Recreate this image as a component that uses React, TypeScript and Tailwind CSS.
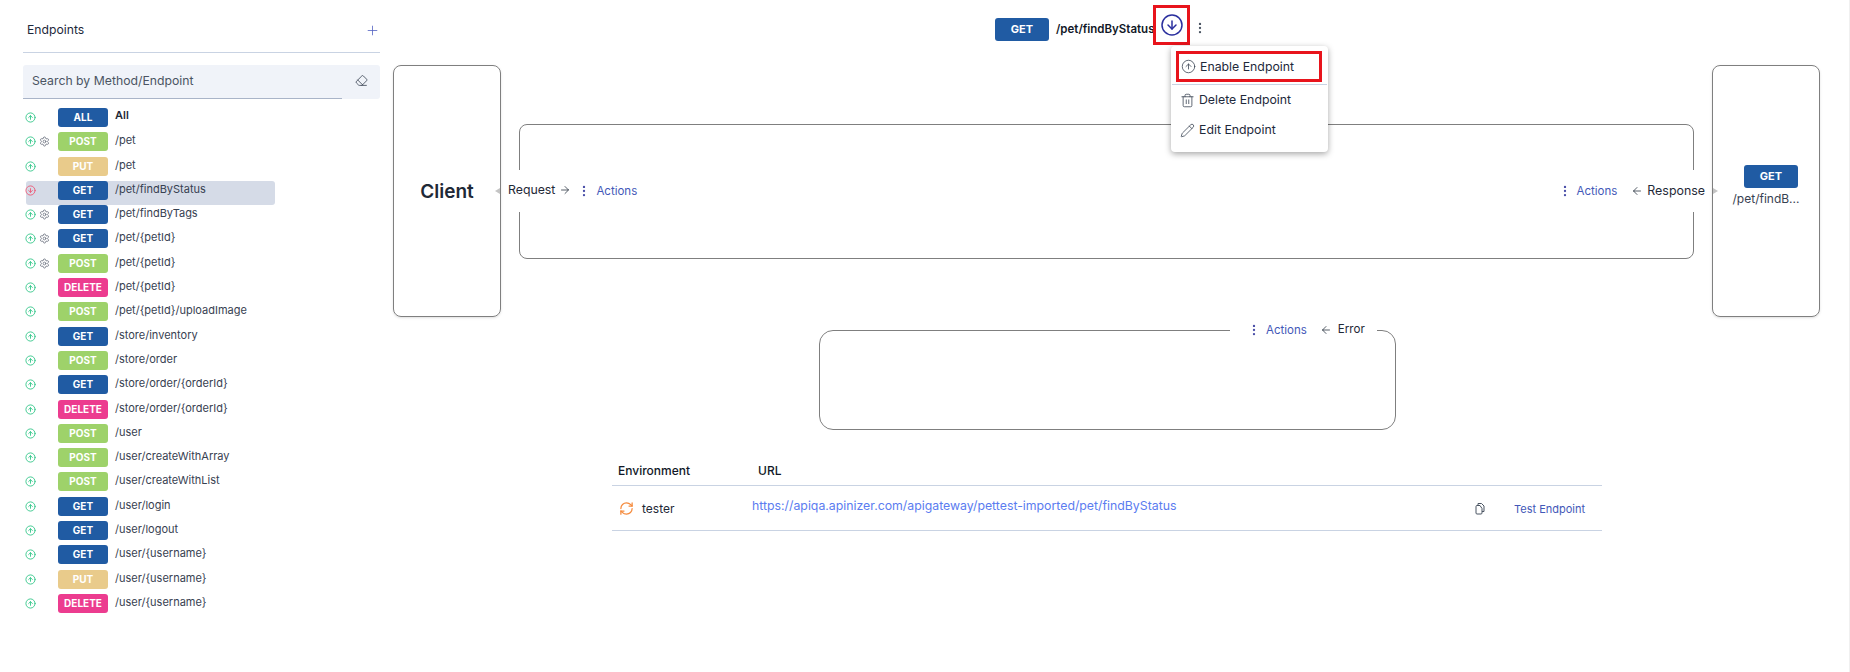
import { ArrowLeft, ArrowRight, CircleArrowDown, CircleArrowUp, EllipsisVertical, Eraser, Pencil, Plus, RefreshCw, Settings, Trash2 } from "lucide-react";

type Method = "ALL" | "GET" | "POST" | "PUT" | "DELETE";

const badgeColors: Record<Method, string> = {
  ALL: "bg-[#205ba3]",
  GET: "bg-[#205ba3]",
  POST: "bg-[#9ed26a]",
  PUT: "bg-[#e9cb8b]",
  DELETE: "bg-[#ec3c8f]",
};

const rows: { method: Method; path: string; gear?: boolean; disabled?: boolean }[] = [
  { method: "ALL", path: "All" },
  { method: "POST", path: "/pet", gear: true },
  { method: "PUT", path: "/pet" },
  { method: "GET", path: "/pet/findByStatus", disabled: true },
  { method: "GET", path: "/pet/findByTags", gear: true },
  { method: "GET", path: "/pet/{petId}", gear: true },
  { method: "POST", path: "/pet/{petId}", gear: true },
  { method: "DELETE", path: "/pet/{petId}" },
  { method: "POST", path: "/pet/{petId}/uploadImage" },
  { method: "GET", path: "/store/inventory" },
  { method: "POST", path: "/store/order" },
  { method: "GET", path: "/store/order/{orderId}" },
  { method: "DELETE", path: "/store/order/{orderId}" },
  { method: "POST", path: "/user" },
  { method: "POST", path: "/user/createWithArray" },
  { method: "POST", path: "/user/createWithList" },
  { method: "GET", path: "/user/login" },
  { method: "GET", path: "/user/logout" },
  { method: "GET", path: "/user/{username}" },
  { method: "PUT", path: "/user/{username}" },
  { method: "DELETE", path: "/user/{username}" },
];

function Actions() {
  return (
    <span className="flex items-center gap-[5px] text-[11.5px] text-[#4358b8]">
      <EllipsisVertical size={14} strokeWidth={2} className="text-[#4a4fa8]" />
      <span className="mt-[1px]">Actions</span>
    </span>
  );
}

function CopyIcon() {
  return (
    <svg width="10" height="13" viewBox="0 0 10 13" fill="none" stroke="#4b5563" strokeWidth="1" className="shrink-0">
      <path d="M3 3V1.5h3.5L9 4v5.5H7" />
      <path d="M1 4.5V11a1 1 0 0 0 1 1h4a1 1 0 0 0 1-1V6.5L5 3.5H2a1 1 0 0 0-1 1z" />
    </svg>
  );
}

function Sidebar() {
  return (
    <aside className="w-[393px] shrink-0 pl-[23px] pr-[13px]">
      <div className="flex h-[53px] items-center justify-between border-b border-[#c9d3e3] pl-[4px] pt-[8px]">
        <span className="text-[12.2px] text-[#1e293b]">Endpoints</span>
        <Plus size={15} strokeWidth={1.25} className="text-[#4f5fc0]" />
      </div>
      <div className="mt-[12px] flex h-[34px] rounded-[3px] bg-[#f0f3f9]">
        <input
          readOnly
          placeholder="Search by Method/Endpoint"
          className="h-full w-[319px] border-b border-[#a9b4c8] bg-transparent pb-[2px] pl-[9px] text-[12.25px] outline-none placeholder:text-[#4b5563]"
        />
        <Eraser size={13} strokeWidth={1.5} className="ml-[13px] mt-[9px] text-[#374151]" />
      </div>
      <div className="mt-[9px]">
        {rows.map((r, i) => (
          <div key={i} className={`ml-[3px] flex h-[24.3px] w-[249px] items-start rounded-[3px] ${r.disabled ? "bg-[#d5dbe7]" : ""}`}>
            <span className="ml-[-1px] mt-[4px] w-[10px]">
              {r.disabled ? (
                <CircleArrowDown size={11} strokeWidth={2} className="text-[#ee5a76]" />
              ) : (
                <CircleArrowUp size={11} strokeWidth={2} className="text-[#36c78b]" />
              )}
            </span>
            <span className="ml-[4px] mt-[4px] w-[10px]">
              {r.gear && <Settings size={11} strokeWidth={1.75} className="text-[#6b7280]" />}
            </span>
            <span className={`ml-[9px] flex h-[19px] w-[50px] shrink-0 items-center justify-center rounded-[3px] text-[10px] font-bold text-white ${badgeColors[r.method]}`}>
              {r.method}
            </span>
            <span className={`ml-[7px] whitespace-nowrap text-[11px] leading-[15px] ${i === 0 ? "font-semibold text-[#1f2937]" : "mt-[1px] text-[#374151]"}`}>
              {r.path}
            </span>
          </div>
        ))}
      </div>
    </aside>
  );
}

function HeaderBar() {
  return (
    <div className="relative flex h-[65px] items-start pl-[602px]">
      <span className="mt-[18px] flex h-[23px] w-[54px] items-center justify-center rounded-[3px] bg-[#205ba3] text-[11px] font-bold text-white">GET</span>
      <span className="ml-[7px] mt-[21px] w-[97px] whitespace-nowrap text-[11.5px] font-semibold text-[#111827]">/pet/findByStatus</span>
      <span className="mt-[5px] flex h-[40px] w-[37px] items-center justify-center border-[3px] border-[#e8141c]">
        <CircleArrowDown size={24} strokeWidth={1.5} className="text-[#2a2f9e]" />
      </span>
      <EllipsisVertical size={14} strokeWidth={2} className="ml-[3px] mt-[21px] text-[#4b5563]" />
      <div className="absolute left-[778px] top-[46px] z-10 h-[106px] w-[157px] rounded-[4px] bg-white pl-[5px] pt-[5px] text-[12.3px] text-[#1e293b] shadow-[0_2px_6px_rgba(0,0,0,0.35)]">
        <div className="flex h-[31px] w-[146px] items-center gap-[4px] border-[3px] border-[#e8141c] pl-[2px]">
          <CircleArrowUp size={15} strokeWidth={1.25} className="text-[#374151]" />
          <span className="mt-[2px]">Enable Endpoint</span>
        </div>
        <div className="ml-[-4px] mr-[1px] mt-[2px] border-t border-[#c9d3e3]" />
        <div className="flex h-[30px] items-center gap-[4px] pl-[4px]">
          <Trash2 size={15} strokeWidth={1.25} className="text-[#374151]" />
          Delete Endpoint
        </div>
        <div className="flex h-[30px] items-center gap-[4px] pl-[4px]">
          <Pencil size={15} strokeWidth={1.25} className="text-[#374151]" />
          Edit Endpoint
        </div>
      </div>
    </div>
  );
}

function Diagram() {
  return (
    <div className="flex h-[252px] items-start">
      <div className="relative flex h-[252px] w-[108px] shrink-0 items-center justify-center rounded-[8px] border border-[#7f7f7f] pt-[2px] text-[19px] font-semibold text-[#1f2937] shadow-sm">
        Client
        <span className="absolute right-0 top-[122px] border-y-[3px] border-r-[5px] border-y-transparent border-r-[#c4c4c4]" />
      </div>
      <div className="relative ml-[18px] mt-[59px] h-[135px] w-[1175px] rounded-[8px] border border-[#7f7f7f]">
        <div className="absolute left-[-12px] top-[45px] flex h-[42px] items-center bg-white pr-[6px] text-[12.3px] text-[#1f2937]">
          <span className="mb-[2px] flex items-center">
            Request
            <ArrowRight size={12} strokeWidth={1.5} className="ml-[4px]" />
          </span>
          <span className="ml-[6px]"><Actions /></span>
        </div>
        <div className="absolute right-[-12px] top-[45px] flex h-[42px] items-center bg-white pl-[6px] text-[12.4px] text-[#1f2937]">
          <Actions />
          <ArrowLeft size={12} strokeWidth={1.5} className="ml-[14px] mr-[4px]" />
          Response
        </div>
      </div>
      <div className="relative ml-[18px] flex h-[252px] w-[108px] shrink-0 flex-col items-center rounded-[8px] border border-[#7f7f7f] pt-[99px] shadow-sm">
        <span className="absolute left-0 top-[122px] border-y-[3px] border-l-[5px] border-y-transparent border-l-[#c4c4c4]" />
        <span className="ml-[10px] flex h-[23px] w-[54px] items-center justify-center rounded-[3px] bg-[#205ba3] text-[11px] font-bold text-white">GET</span>
        <span className="mt-[2px] text-[12px] text-[#374151]">/pet/findB...</span>
      </div>
    </div>
  );
}

function ErrorBox() {
  return (
    <div className="relative ml-[426px] mt-[13px] h-[100px] w-[577px] rounded-[14px] border border-[#7f7f7f]">
      <div className="absolute left-[410px] top-[-11px] flex h-[20px] w-[147px] items-center bg-white pl-[17px] text-[11.6px] text-[#1f2937]">
        <Actions />
        <ArrowLeft size={12} strokeWidth={1.5} className="ml-[13px] mr-[6px]" />
        <span className="mb-[1px]">Error</span>
      </div>
    </div>
  );
}

function EnvTable() {
  return (
    <div className="ml-[219px] mt-[26px] w-[990px]">
      <div className="flex h-[30px] items-center border-b border-[#c9d3e3] pl-[6px] pt-[1px] text-[12px] font-medium text-[#111827]">
        <span className="w-[140px]">Environment</span>
        <span>URL</span>
      </div>
      <div className="flex h-[45px] items-center border-b border-[#c9d3e3] text-[12px]">
        <RefreshCw size={15} strokeWidth={2} className="ml-[7px] text-[#f58a3c]" />
        <span className="ml-[8px] mt-[2px] w-[110px] text-[#1f2937]">tester</span>
        <span className="mb-[4px] w-[723px] whitespace-nowrap text-[12.3px] text-[#5b7cf0]">https://apiqa.apinizer.com/apigateway/pettest-imported/pet/findByStatus</span>
        <CopyIcon />
        <span className="ml-[29px] mt-[2px] text-[11px] text-[#4358b8]">Test Endpoint</span>
      </div>
    </div>
  );
}

export default function App() {
  return (
    <div className="flex h-[672px] w-[1850px] overflow-hidden border-r border-[#f0f0f0] bg-white font-['Inter',sans-serif]">
      <Sidebar />
      <main className="w-[1427px]">
        <HeaderBar />
        <Diagram />
        <ErrorBox />
        <EnvTable />
      </main>
    </div>
  );
}
